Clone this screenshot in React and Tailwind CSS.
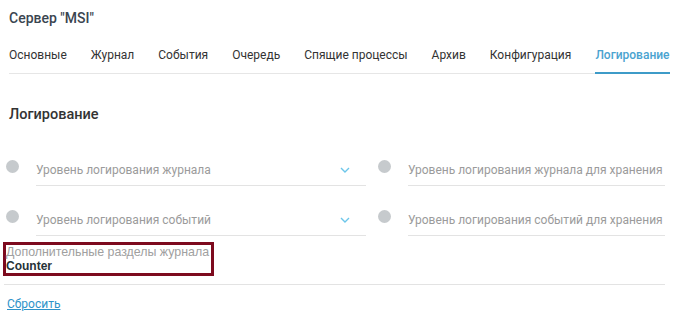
import React from "react";

const tabs = [
  "Основные",
  "Журнал",
  "События",
  "Очередь",
  "Спящие процессы",
  "Архив",
  "Конфигурация",
  "Логирование",
];

const Chevron = () => (
  <svg width="10" height="6" viewBox="0 0 10 6" className="shrink-0">
    <path d="M1 1l4 4 4-4" fill="none" stroke="#6cc6ea" strokeWidth="1.4" />
  </svg>
);

const Field = ({ label, select }) => (
  <div className="flex items-start">
    <div className="w-[13px] h-[13px] mt-[6px] rounded-full bg-[#c6cacd] shrink-0" />
    <div className="ml-[17px] flex-1 flex items-center justify-between pt-[8px] pb-[7px] border-b border-[#e3e3e3]">
      <span className="text-[12px] leading-[16px] text-[#9b9b9b] whitespace-nowrap">{label}</span>
      {select && (
        <span className="mr-[16px]">
          <Chevron />
        </span>
      )}
    </div>
  </div>
);

export default function App() {
  const active = "Логирование";

  return (
    <div className="w-[682px] h-[321px] bg-white font-[family-name:Roboto,sans-serif] overflow-hidden">
      <div className="pl-[9px] pr-[13px] pt-[8px]">
        <h1 className="text-[14px] leading-[20px] font-medium text-[#3a4550]">
          Сервер "MSI"
        </h1>
        <div className="mt-[9px] flex gap-6 border-b border-[#e6e6e6]">
          {tabs.map((t) => (
            <div
              key={t}
              className={
                t === active
                  ? "pt-[10px] pb-[9px] -mb-px text-[12px] leading-[16px] font-medium text-[#4aa3d0] border-b-2 border-[#3d9bc8] whitespace-nowrap"
                  : "pt-[10px] pb-[9px] -mb-px text-[12px] leading-[16px] text-[#333] border-b-2 border-transparent whitespace-nowrap"
              }
            >
              {t}
            </div>
          ))}
        </div>
        <h2 className="mt-[31px] text-[14.5px] leading-[20px] font-medium text-[#333]">
          Логирование
        </h2>
      </div>

      <div className="mt-[29px] pl-[6px] pr-[17px] grid grid-cols-[360px_1fr] gap-x-[12px] gap-y-[18px]">
        <Field label="Уровень логирования журнала" select />
        <Field label="Уровень логирования журнала для хранения" />
        <Field label="Уровень логирования событий" select />
        <Field label="Уровень логирования событий для хранения" />
      </div>

      <div className="pl-[3px] pr-[17px]">
        <div className="mt-[6px] w-[211px] border-[3px] border-[#7d0a1e] font-[family-name:'Liberation_Sans',Arial,sans-serif]">
          <div className="text-[12.4px] leading-[14px] text-[#a0a0a0] whitespace-nowrap">
            Дополнительные разделы журнала
          </div>
          <div className="text-[12px] leading-[14px] font-bold text-[#263238]">
            Counter
          </div>
        </div>
        <div className="mt-[8px] ml-[1px] border-t border-[#e3e3e3]" />
        <a
          href="#"
          className="mt-[11px] ml-[4px] inline-block text-[12px] leading-[16px] text-[#2e93c9] underline"
        >
          Сбросить
        </a>
      </div>
    </div>
  );
}
